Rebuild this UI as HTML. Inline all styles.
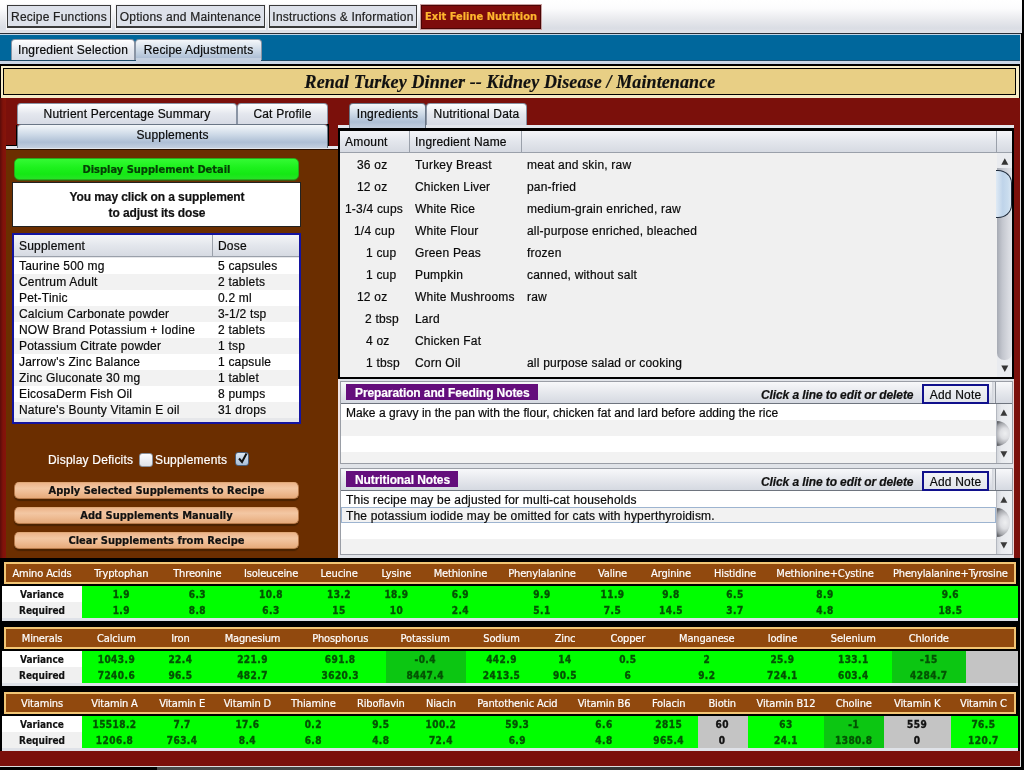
<!DOCTYPE html>
<html>
<head>
<meta charset="utf-8">
<title>Feline Nutrition</title>
<style>
html,body{margin:0;padding:0;}
body{width:1024px;height:770px;position:relative;overflow:hidden;background:#000;font-family:"Liberation Sans",sans-serif;font-size:12px;color:#0a0a0a;letter-spacing:0.2px;-webkit-text-stroke:0.2px;}
.a{position:absolute;box-sizing:border-box;}
.t{position:absolute;white-space:nowrap;line-height:14px;}
/* menu bar */
#menubar{left:0;top:0;width:1022px;height:34px;background:linear-gradient(#ffffff 0%,#fcfcfd 25%,#e8e9ed 60%,#dadde4 85%,#e0e2e8 100%);border-bottom:1px solid #2a2e36;}
.mbtn{top:4px;height:26px;border:1px solid #f4f4f6;border-bottom-width:2px;background:#dde1ea;}
.mbtn i{position:absolute;left:0;top:0;right:0;bottom:0;border:1px solid #3a3a3a;border-bottom-width:2px;}
.mbtn span{position:absolute;left:0;right:0;top:5px;text-align:center;font-size:12px;line-height:14px;color:#222;}
/* blue bar */
#bluebar{left:0;top:34px;width:1020px;height:27px;background:#00679c;border-top:1px solid #c0d4e6;}
.tab{border:1px solid #8a94a4;border-bottom:none;border-radius:4px 4px 0 0;background:linear-gradient(#ffffff,#e4e7ee 50%,#d7dbe5);text-align:center;font-size:12px;line-height:14px;color:#0a0a0a;}
.tabsel{background:linear-gradient(#f4f7fa 0%,#cfdbe8 40%,#aebfd5 75%,#c4d0e0 100%);}
/* nutrient table */
.nh{height:22px;border:2px solid #f3c674;background:#91490e;}
.nh span,.nv span{position:absolute;white-space:nowrap;transform:translateX(-50%);}
.nh span{top:3px;font-family:"DejaVu Sans Condensed","DejaVu Sans",sans-serif;font-size:11px;line-height:14px;color:#fff;letter-spacing:-0.15px;}
.nv{height:16px;}
.nv span{top:2px;font-family:"DejaVu Sans Condensed","DejaVu Sans",sans-serif;font-weight:bold;font-size:10px;line-height:14px;color:#045204;letter-spacing:0.45px;-webkit-text-stroke:0.35px;}
.nv span.lb{font-size:10px;letter-spacing:0;-webkit-text-stroke:0.15px;}
.nv span.k{color:#111;}
.g{background:#00ff00;}
.dg{background:#0cc612;}
.gr{background:#c4c4c4;}
.obtn{left:14px;width:285px;height:17px;border-radius:5px;background:linear-gradient(#ecb48a 0%,#f3c7a3 35%,#efbd95 60%,#e6aa7a 100%);border:1px solid #b87a4a;border-top-color:#e0a878;box-shadow:0 1.5px 1px #4a2200;}
.obtn span{position:absolute;left:0;right:0;top:1px;text-align:center;font-family:"DejaVu Sans Condensed","DejaVu Sans",sans-serif;font-weight:bold;font-size:11px;line-height:14px;color:#111;letter-spacing:0;white-space:nowrap;}
.sb{width:17px;background:#e6e8ec;border-left:1px solid #b8bcc4;}
</style>
</head>
<body>
<div id="root" style="position:absolute;left:0;top:0;width:1024px;height:770px;will-change:transform;">
<!-- MENU BAR -->
<div class="a" id="menubar"></div>
<div class="a mbtn" style="left:6px;width:106px;"><i></i><span>Recipe Functions</span></div>
<div class="a mbtn" style="left:115px;width:151px;"><i></i><span>Options and Maintenance</span></div>
<div class="a mbtn" style="left:268px;width:150px;"><i></i><span>Instructions &amp; Information</span></div>
<div class="a" style="left:420px;top:4px;width:122px;height:26px;background:#7d0c0c;border:1px solid #c9a0a0;box-shadow:inset 0 0 0 1px #4a0505;"><span class="t" style="left:0;right:0;top:5px;text-align:center;color:#ffb62e;font-family:'DejaVu Sans Condensed','DejaVu Sans',sans-serif;font-weight:bold;font-size:11px;letter-spacing:0;">Exit Feline Nutrition</span></div>
<div class="a" style="left:1022px;top:0;width:2px;height:770px;background:#000;"></div>

<!-- BLUE BAR + TABS -->
<div class="a" id="bluebar"></div>
<div class="a tab" style="left:11px;top:39px;width:124px;height:22px;padding-top:3px;">Ingredient Selection</div>
<div class="a tab tabsel" style="left:135px;top:39px;width:127px;height:25px;padding-top:3px;">Recipe Adjustments</div>
<div class="a" style="left:0;top:60px;width:1020px;height:4px;background:#c9d6e6;border-top:1px solid #1c4a68;"></div>
<div class="a tabsel" style="left:136px;top:58px;width:125px;height:6px;background:#c4d0e0;"></div>
<div class="a" style="left:0;top:64px;width:1020px;height:2px;background:#000;"></div>

<!-- TITLE BANNER -->
<div class="a" style="left:0;top:66px;width:1020px;height:32px;background:#f6ecc8;border-left:1px solid #000;border-right:1px solid #000;"></div>
<div class="a" style="left:3px;top:68px;width:1013px;height:27px;background:#e8cf85;border:1px solid #000;"></div>
<div class="t" style="left:0;width:1020px;top:72px;text-align:center;font-family:'Liberation Serif',serif;font-weight:bold;font-style:italic;font-size:18px;line-height:20px;color:#111;letter-spacing:0.12px;">Renal Turkey Dinner -- Kidney Disease / Maintenance</div>

<!-- MAIN RED BACKGROUND -->
<div class="a" style="left:0;top:98px;width:1020px;height:460px;background:#7b100b;"></div>
<div class="a" style="left:0;top:98px;width:6px;height:460px;background:linear-gradient(90deg,#5a0c0a,#80120a 50%,#86140a);"></div>
<div class="a" style="left:1020px;top:34px;width:1px;height:733px;background:#dcdcdc;"></div>
<div class="a" style="left:1021px;top:33px;width:3px;height:737px;background:#000;"></div>

<!-- LEFT PANEL -->
<div class="a" style="left:6px;top:145px;width:11px;height:1px;background:#000;"></div>
<div class="a" style="left:16px;top:125px;width:1px;height:21px;background:#000;"></div>
<div class="a" style="left:327px;top:124px;width:2px;height:23px;background:#000;"></div>
<div class="a" style="left:6px;top:146px;width:333px;height:3px;background:#e3e6ec;"></div>
<div class="a tab" style="left:17px;top:103px;width:220px;height:21px;padding-top:3px;">Nutrient Percentage Summary</div>
<div class="a tab" style="left:237px;top:103px;width:91px;height:21px;padding-top:3px;">Cat Profile</div>
<div class="a tab tabsel" style="left:17px;top:124px;width:311px;height:24px;padding-top:3px;border-color:#6a7686;">Supplements</div>
<div class="a" style="left:6px;top:149px;width:332px;height:409px;background:#6b2e00;border-top:1px solid #2a1000;"></div>
<div class="a" style="left:14px;top:158px;width:285px;height:22px;border-radius:5px;background:linear-gradient(#34fa34 0%,#1ef21e 40%,#14e814 75%,#26e426 100%);border:1px solid #2aa81a;box-shadow:0 1px 0 #3a5a10;"><span class="t" style="left:0;right:0;top:4px;text-align:center;font-family:'DejaVu Sans Condensed','DejaVu Sans',sans-serif;font-weight:bold;font-size:11px;color:#064006;letter-spacing:0;">Display Supplement Detail</span></div>
<div class="a" style="left:12px;top:182px;width:289px;height:45px;background:#fff;border:1px solid #222;"></div>
<div class="t" style="left:12px;width:290px;top:189px;text-align:center;font-weight:bold;font-size:12px;line-height:16px;color:#111;letter-spacing:-0.1px;">You may click on a supplement<br>to adjust its dose</div>
<!-- supplement table -->
<div class="a" style="left:12px;top:233px;width:289px;height:191px;background:#e6e7ea;border:2px solid #1414a0;"></div>
<div class="a" style="left:14px;top:235px;width:285px;height:22px;background:linear-gradient(#f4f5f8,#e3e6ec 50%,#d6dae2);border-bottom:1px solid #9aa0aa;"></div>
<div class="a" style="left:212px;top:235px;width:1px;height:21px;background:#9aa0aa;"></div>
<div class="t" style="left:19px;top:239px;">Supplement</div>
<div class="t" style="left:218px;top:239px;">Dose</div>
<div class="a" style="left:14px;top:258px;width:285px;height:16px;background:#ffffff;"></div><div class="t" style="left:19px;top:259px;">Taurine 500 mg</div><div class="t" style="left:218px;top:259px;">5 capsules</div>
<div class="a" style="left:14px;top:274px;width:285px;height:16px;background:#f2f2f2;"></div><div class="t" style="left:19px;top:275px;">Centrum Adult</div><div class="t" style="left:218px;top:275px;">2 tablets</div>
<div class="a" style="left:14px;top:290px;width:285px;height:16px;background:#ffffff;"></div><div class="t" style="left:19px;top:291px;">Pet-Tinic</div><div class="t" style="left:218px;top:291px;">0.2 ml</div>
<div class="a" style="left:14px;top:306px;width:285px;height:16px;background:#f2f2f2;"></div><div class="t" style="left:19px;top:307px;">Calcium Carbonate powder</div><div class="t" style="left:218px;top:307px;">3-1/2 tsp</div>
<div class="a" style="left:14px;top:322px;width:285px;height:16px;background:#ffffff;"></div><div class="t" style="left:19px;top:323px;">NOW Brand Potassium + Iodine</div><div class="t" style="left:218px;top:323px;">2 tablets</div>
<div class="a" style="left:14px;top:338px;width:285px;height:16px;background:#f2f2f2;"></div><div class="t" style="left:19px;top:339px;">Potassium Citrate powder</div><div class="t" style="left:218px;top:339px;">1 tsp</div>
<div class="a" style="left:14px;top:354px;width:285px;height:16px;background:#ffffff;"></div><div class="t" style="left:19px;top:355px;">Jarrow's Zinc Balance</div><div class="t" style="left:218px;top:355px;">1 capsule</div>
<div class="a" style="left:14px;top:370px;width:285px;height:16px;background:#f2f2f2;"></div><div class="t" style="left:19px;top:371px;">Zinc Gluconate 30 mg</div><div class="t" style="left:218px;top:371px;">1 tablet</div>
<div class="a" style="left:14px;top:386px;width:285px;height:16px;background:#ffffff;"></div><div class="t" style="left:19px;top:387px;">EicosaDerm Fish Oil</div><div class="t" style="left:218px;top:387px;">8 pumps</div>
<div class="a" style="left:14px;top:402px;width:285px;height:16px;background:#f2f2f2;"></div><div class="t" style="left:19px;top:403px;">Nature's Bounty Vitamin E oil</div><div class="t" style="left:218px;top:403px;">31 drops</div>

<div class="t" style="left:48px;top:453px;color:#fff;">Display Deficits</div>
<div class="t" style="left:155px;top:453px;color:#fff;">Supplements</div>
<div class="a" style="left:139px;top:453px;width:14px;height:14px;border-radius:3px;background:linear-gradient(#fdfdfe,#dfe3ea);border:1px solid #8a929e;"></div>
<div class="a" style="left:235px;top:452px;width:14px;height:14px;border-radius:3px;background:linear-gradient(#dbe6f2,#a9bfd8);border:1px solid #4a5f7a;"></div>
<svg class="a" style="left:235px;top:450px;" width="16" height="16" viewBox="0 0 16 16"><path d="M4 8.5 L7 12 L11.5 3.5" fill="none" stroke="#111" stroke-width="2"/></svg>
<div class="a obtn" style="top:482px;"><span>Apply Selected Supplements to Recipe</span></div>
<div class="a obtn" style="top:507px;"><span>Add Supplements Manually</span></div>
<div class="a obtn" style="top:532px;"><span>Clear Supplements from Recipe</span></div>

<!-- RIGHT PANEL -->
<div class="a" style="left:338px;top:125px;width:676px;height:3px;background:#e3e6ec;"></div>
<div class="a tab tabsel" style="left:349px;top:103px;width:77px;height:25px;padding-top:3px;border-color:#6a7686;">Ingredients</div>
<div class="a tab" style="left:426px;top:103px;width:101px;height:22px;padding-top:3px;">Nutritional Data</div>
<div class="a" style="left:338px;top:128px;width:676px;height:252px;background:#f0f0f0;border:2px solid #000;border-top-width:3px;border-bottom-width:3px;"></div>
<div class="a" style="left:340px;top:131px;width:672px;height:22px;background:linear-gradient(#f4f5f8,#e3e6ec 50%,#d6dae2);border-bottom:1px solid #9aa0aa;"></div>
<div class="a" style="left:409px;top:131px;width:1px;height:21px;background:#9aa0aa;"></div>
<div class="a" style="left:521px;top:131px;width:1px;height:21px;background:#9aa0aa;"></div>
<div class="a" style="left:996px;top:131px;width:1px;height:21px;background:#9aa0aa;"></div>
<div class="t" style="left:345px;top:135px;">Amount</div>
<div class="t" style="left:415px;top:135px;">Ingredient Name</div>
<div class="t" style="left:357px;top:158px;">36 oz</div><div class="t" style="left:415px;top:158px;">Turkey Breast</div><div class="t" style="left:527px;top:158px;">meat and skin, raw</div>
<div class="t" style="left:357px;top:180px;">12 oz</div><div class="t" style="left:415px;top:180px;">Chicken Liver</div><div class="t" style="left:527px;top:180px;">pan-fried</div>
<div class="t" style="left:345px;top:202px;">1-3/4 cups</div><div class="t" style="left:415px;top:202px;">White Rice</div><div class="t" style="left:527px;top:202px;">medium-grain enriched, raw</div>
<div class="t" style="left:354px;top:224px;">1/4 cup</div><div class="t" style="left:415px;top:224px;">White Flour</div><div class="t" style="left:527px;top:224px;">all-purpose enriched, bleached</div>
<div class="t" style="left:366px;top:246px;">1 cup</div><div class="t" style="left:415px;top:246px;">Green Peas</div><div class="t" style="left:527px;top:246px;">frozen</div>
<div class="t" style="left:366px;top:268px;">1 cup</div><div class="t" style="left:415px;top:268px;">Pumpkin</div><div class="t" style="left:527px;top:268px;">canned, without salt</div>
<div class="t" style="left:357px;top:290px;">12 oz</div><div class="t" style="left:415px;top:290px;">White Mushrooms</div><div class="t" style="left:527px;top:290px;">raw</div>
<div class="t" style="left:365px;top:312px;">2 tbsp</div><div class="t" style="left:415px;top:312px;">Lard</div>
<div class="t" style="left:366px;top:334px;">4 oz</div><div class="t" style="left:415px;top:334px;">Chicken Fat</div>
<div class="t" style="left:366px;top:356px;">1 tbsp</div><div class="t" style="left:415px;top:356px;">Corn Oil</div><div class="t" style="left:527px;top:356px;">all purpose salad or cooking</div>

<!-- scrollbar main -->
<div class="a" style="left:997px;top:153px;width:15px;height:224px;background:#e9ebef;"></div>
<div class="a" style="left:997px;top:168px;width:15px;height:192px;border-radius:0 0 7px 7px;background:linear-gradient(90deg,#a6aab3,#c3c6ce 35%,#d9dbe1 80%,#dfe1e6);"></div>
<div class="a" style="left:996px;top:170px;width:16px;height:48px;border-radius:0 14px 14px 0 / 0 13px 13px 0;background:linear-gradient(90deg,#dfeaf5,#bfd4ea 45%,#c9dcee 80%,#d8e5f2);border:1.5px solid #1e2a3a;border-left:none;"></div>
<svg class="a" style="left:997px;top:153px;" width="15" height="16"><path d="M4.3 11.8 L11.3 11.8 L7.8 5.2 Z" fill="#333"/></svg>
<svg class="a" style="left:997px;top:361px;" width="15" height="16"><path d="M4.3 4.4 L11.3 4.4 L7.8 10.9 Z" fill="#333"/></svg>

<!-- NOTES 1 -->
<div class="a" style="left:338px;top:379px;width:676px;height:179px;background:#e0e3e8;border-left:2px solid #f0e4e4;"></div>
<div class="a" style="left:340px;top:381px;width:673px;height:83px;background:#f2f2f2;border:1px solid #9a9ea6;"></div>
<div class="a" style="left:341px;top:382px;width:671px;height:22px;background:linear-gradient(#f7f8fa,#e6e8ed 50%,#d5d9e1);border-bottom:1px solid #6e747e;"></div>
<div class="a" style="left:346px;top:384px;width:192px;height:16px;background:#640e7c;"></div>
<div class="t" style="left:355px;top:386px;color:#fff;font-weight:bold;letter-spacing:-0.1px;">Preparation and Feeding Notes</div>
<div class="t" style="left:761px;top:388px;font-weight:bold;font-style:italic;color:#111;letter-spacing:-0.1px;">Click a line to edit or delete</div>
<div class="a" style="left:922px;top:384px;width:67px;height:20px;background:linear-gradient(#f2f3f6,#e2e5eb);border:2px solid #10108c;"></div>
<div class="t" style="left:922px;width:67px;top:388px;text-align:center;">Add Note</div>
<div class="a" style="left:992px;top:382px;width:4px;height:21px;background:linear-gradient(90deg,#d0d3da,#eceef1);"></div>
<div class="a" style="left:995px;top:382px;width:1px;height:21px;background:#8e939c;"></div>
<div class="a" style="left:341px;top:404px;width:655px;height:16px;background:#ffffff;"></div>
<div class="a" style="left:341px;top:420px;width:655px;height:16px;background:#f2f2f2;"></div>
<div class="a" style="left:341px;top:436px;width:655px;height:16px;background:#ffffff;"></div>
<div class="a" style="left:341px;top:452px;width:655px;height:11px;background:#f2f2f2;"></div>
<div class="t" style="left:346px;top:406px;letter-spacing:0.04px;">Make a gravy in the pan with the flour, chicken fat and lard before adding the rice</div>
<div class="a" style="left:996px;top:404px;width:16px;height:59px;background:linear-gradient(90deg,#d4d7dc,#e8eaee 30%,#eef0f3);border-left:1px solid #b4b8c0;"></div>
<div class="a" style="left:997px;top:421px;width:13px;height:25px;border-radius:0 13px 13px 0 / 0 12.5px 12.5px 0;background:radial-gradient(ellipse 95% 55% at 62% 50%,#eeeff1 0%,#dddee2 40%,#a2a4a9 80%,#63656a 100%);"></div>
<svg class="a" style="left:996px;top:404px;" width="16" height="16"><path d="M4.4 11.8 L11.3 11.8 L7.85 5.5 Z" fill="#3a3a3a"/></svg>
<svg class="a" style="left:996px;top:447px;" width="16" height="16"><path d="M4.4 4.3 L11.3 4.3 L7.85 10.6 Z" fill="#3a3a3a"/></svg>
<!-- NOTES 2 -->
<div class="a" style="left:340px;top:468px;width:673px;height:87px;background:#f2f2f2;border:1px solid #9a9ea6;"></div>
<div class="a" style="left:341px;top:469px;width:671px;height:22px;background:linear-gradient(#f7f8fa,#e6e8ed 50%,#d5d9e1);border-bottom:1px solid #6e747e;"></div>
<div class="a" style="left:346px;top:471px;width:112px;height:16px;background:#640e7c;"></div>
<div class="t" style="left:355px;top:473px;color:#fff;font-weight:bold;letter-spacing:-0.1px;">Nutritional Notes</div>
<div class="t" style="left:761px;top:475px;font-weight:bold;font-style:italic;color:#111;letter-spacing:-0.1px;">Click a line to edit or delete</div>
<div class="a" style="left:922px;top:471px;width:67px;height:20px;background:linear-gradient(#f2f3f6,#e2e5eb);border:2px solid #10108c;"></div>
<div class="t" style="left:922px;width:67px;top:475px;text-align:center;">Add Note</div>
<div class="a" style="left:992px;top:469px;width:4px;height:21px;background:linear-gradient(90deg,#d0d3da,#eceef1);"></div>
<div class="a" style="left:995px;top:469px;width:1px;height:21px;background:#8e939c;"></div>
<div class="a" style="left:341px;top:491px;width:655px;height:16px;background:#ffffff;"></div>
<div class="a" style="left:341px;top:507px;width:655px;height:16px;background:#f2f2f2;border:1px solid #9db4d0;"></div>
<div class="a" style="left:341px;top:523px;width:655px;height:16px;background:#ffffff;"></div>
<div class="a" style="left:341px;top:539px;width:655px;height:15px;background:#f2f2f2;"></div>
<div class="t" style="left:346px;top:493px;letter-spacing:0.19px;">This recipe may be adjusted for multi-cat households</div>
<div class="t" style="left:346px;top:509px;letter-spacing:0.16px;">The potassium iodide may be omitted for cats with hyperthyroidism.</div>
<div class="a" style="left:996px;top:491px;width:16px;height:63px;background:linear-gradient(90deg,#d4d7dc,#e8eaee 30%,#eef0f3);border-left:1px solid #b4b8c0;"></div>
<div class="a" style="left:997px;top:508px;width:13px;height:29px;border-radius:0 13px 13px 0 / 0 14.5px 14.5px 0;background:radial-gradient(ellipse 95% 55% at 62% 50%,#eeeff1 0%,#dddee2 40%,#a2a4a9 80%,#63656a 100%);"></div>
<svg class="a" style="left:996px;top:491px;" width="16" height="16"><path d="M4.4 11.8 L11.3 11.8 L7.85 5.5 Z" fill="#3a3a3a"/></svg>
<svg class="a" style="left:996px;top:538px;" width="16" height="16"><path d="M4.4 4.3 L11.3 4.3 L7.85 10.6 Z" fill="#3a3a3a"/></svg>
<div class="a" style="left:1013px;top:380px;width:1px;height:177px;background:#f0d8d8;"></div>
<div class="a" style="left:0;top:558px;width:1020px;height:4px;background:#000;"></div>

<!-- NUTRIENT TABLES -->
<div class="a nh" style="left:4px;top:562px;width:1012px;"><span style="left:36.0px;">Amino Acids</span><span style="left:115.3px;">Tryptophan</span><span style="left:191.4px;">Threonine</span><span style="left:265.0px;">Isoleuceine</span><span style="left:333.0px;">Leucine</span><span style="left:390.4px;">Lysine</span><span style="left:454.4px;">Methionine</span><span style="left:536.0px;">Phenylalanine</span><span style="left:606.5px;">Valine</span><span style="left:665.0px;">Arginine</span><span style="left:729.0px;">Histidine</span><span style="left:819.0px;">Methionine+Cystine</span><span style="left:944.4px;">Phenylalanine+Tyrosine</span></div>
<div class="a" style="left:2px;top:586px;width:1016px;height:35px;background:#dfe2e8;"></div><div class="a" style="left:2px;top:586px;width:80px;height:16px;background:#fff;"></div><div class="a" style="left:2px;top:602px;width:80px;height:16px;background:#f0f0f0;"></div><div class="a g" style="left:82px;top:586px;width:936px;height:32px;"></div>
<div class="a nv" style="left:0;top:586px;width:1018px;"><span class="k lb" style="left:42px;">Variance</span><span style="left:121.3px;">1.9</span><span style="left:197.4px;">6.3</span><span style="left:271.0px;">10.8</span><span style="left:339.0px;">13.2</span><span style="left:396.4px;">18.9</span><span style="left:460.4px;">6.9</span><span style="left:542.0px;">9.9</span><span style="left:612.5px;">11.9</span><span style="left:671.0px;">9.8</span><span style="left:735.0px;">6.5</span><span style="left:825.0px;">8.9</span><span style="left:950.4px;">9.6</span></div>
<div class="a nv" style="left:0;top:602px;width:1018px;"><span class="k lb" style="left:42px;">Required</span><span style="left:121.3px;">1.9</span><span style="left:197.4px;">8.8</span><span style="left:271.0px;">6.3</span><span style="left:339.0px;">15</span><span style="left:396.4px;">10</span><span style="left:460.4px;">2.4</span><span style="left:542.0px;">5.1</span><span style="left:612.5px;">7.5</span><span style="left:671.0px;">14.5</span><span style="left:735.0px;">3.7</span><span style="left:825.0px;">4.8</span><span style="left:950.4px;">18.5</span></div>
<div class="a nh" style="left:4px;top:627px;width:1012px;"><span style="left:36.0px;">Minerals</span><span style="left:110.4px;">Calcium</span><span style="left:174.4px;">Iron</span><span style="left:246.5px;">Magnesium</span><span style="left:334.2px;">Phosphorus</span><span style="left:419.2px;">Potassium</span><span style="left:495.5px;">Sodium</span><span style="left:559.0px;">Zinc</span><span style="left:621.8px;">Copper</span><span style="left:700.8px;">Manganese</span><span style="left:776.4px;">Iodine</span><span style="left:847.3px;">Selenium</span><span style="left:922.8px;">Chloride</span></div>
<div class="a" style="left:2px;top:651px;width:1016px;height:35px;background:#dfe2e8;"></div><div class="a" style="left:2px;top:651px;width:80px;height:16px;background:#fff;"></div><div class="a" style="left:2px;top:667px;width:80px;height:16px;background:#f0f0f0;"></div><div class="a g" style="left:82px;top:651px;width:304px;height:32px;"></div><div class="a dg" style="left:386px;top:651px;width:80px;height:32px;"></div><div class="a g" style="left:466px;top:651px;width:426px;height:32px;"></div><div class="a dg" style="left:892px;top:651px;width:74px;height:32px;"></div><div class="a gr" style="left:966px;top:651px;width:52px;height:32px;"></div>
<div class="a nv" style="left:0;top:651px;width:1018px;"><span class="k lb" style="left:42px;">Variance</span><span style="left:116.4px;">1043.9</span><span style="left:180.4px;">22.4</span><span style="left:252.5px;">221.9</span><span style="left:340.2px;">691.8</span><span style="left:425.2px;">-0.4</span><span style="left:501.5px;">442.9</span><span style="left:565.0px;">14</span><span style="left:627.8px;">0.5</span><span style="left:706.8px;">2</span><span style="left:782.4px;">25.9</span><span style="left:853.3px;">133.1</span><span style="left:928.8px;">-15</span></div>
<div class="a nv" style="left:0;top:667px;width:1018px;"><span class="k lb" style="left:42px;">Required</span><span style="left:116.4px;">7240.6</span><span style="left:180.4px;">96.5</span><span style="left:252.5px;">482.7</span><span style="left:340.2px;">3620.3</span><span style="left:425.2px;">8447.4</span><span style="left:501.5px;">2413.5</span><span style="left:565.0px;">90.5</span><span style="left:627.8px;">6</span><span style="left:706.8px;">9.2</span><span style="left:782.4px;">724.1</span><span style="left:853.3px;">603.4</span><span style="left:928.8px;">4284.7</span></div>
<div class="a nh" style="left:4px;top:692px;width:1012px;"><span style="left:36.0px;">Vitamins</span><span style="left:108.5px;">Vitamin A</span><span style="left:176.1px;">Vitamin E</span><span style="left:241.4px;">Vitamin D</span><span style="left:307.3px;">Thiamine</span><span style="left:374.8px;">Riboflavin</span><span style="left:434.9px;">Niacin</span><span style="left:511.3px;">Pantothenic Acid</span><span style="left:598.0px;">Vitamin B6</span><span style="left:662.7px;">Folacin</span><span style="left:716.2px;">Biotin</span><span style="left:780.0px;">Vitamin B12</span><span style="left:847.7px;">Choline</span><span style="left:911.2px;">Vitamin K</span><span style="left:977.4px;">Vitamin C</span></div>
<div class="a" style="left:2px;top:716px;width:1016px;height:35px;background:#dfe2e8;"></div><div class="a" style="left:2px;top:716px;width:80px;height:16px;background:#fff;"></div><div class="a" style="left:2px;top:732px;width:80px;height:16px;background:#f0f0f0;"></div><div class="a g" style="left:82px;top:716px;width:616px;height:32px;"></div><div class="a gr" style="left:698px;top:716px;width:50px;height:32px;"></div><div class="a g" style="left:748px;top:716px;width:76px;height:32px;"></div><div class="a dg" style="left:824px;top:716px;width:60px;height:32px;"></div><div class="a gr" style="left:884px;top:716px;width:67px;height:32px;"></div><div class="a g" style="left:951px;top:716px;width:67px;height:32px;"></div>
<div class="a nv" style="left:0;top:716px;width:1018px;"><span class="k lb" style="left:42px;">Variance</span><span style="left:114.5px;">15518.2</span><span style="left:182.1px;">7.7</span><span style="left:247.4px;">17.6</span><span style="left:313.3px;">0.2</span><span style="left:380.8px;">9.5</span><span style="left:440.9px;">100.2</span><span style="left:517.3px;">59.3</span><span style="left:604.0px;">6.6</span><span style="left:668.7px;">2815</span><span class="k" style="left:722.2px;">60</span><span style="left:786.0px;">63</span><span style="left:853.7px;">-1</span><span class="k" style="left:917.2px;">559</span><span style="left:983.4px;">76.5</span></div>
<div class="a nv" style="left:0;top:732px;width:1018px;"><span class="k lb" style="left:42px;">Required</span><span style="left:114.5px;">1206.8</span><span style="left:182.1px;">763.4</span><span style="left:247.4px;">8.4</span><span style="left:313.3px;">6.8</span><span style="left:380.8px;">4.8</span><span style="left:440.9px;">72.4</span><span style="left:517.3px;">6.9</span><span style="left:604.0px;">4.8</span><span style="left:668.7px;">965.4</span><span class="k" style="left:722.2px;">0</span><span style="left:786.0px;">24.1</span><span style="left:853.7px;">1380.8</span><span class="k" style="left:917.2px;">0</span><span style="left:983.4px;">120.7</span></div>
<div class="a" style="left:0;top:751px;width:1020px;height:15px;background:#7b100b;"></div>
<div class="a" style="left:0;top:766px;width:1021px;height:1px;background:#dcdcdc;"></div>
<div class="a" style="left:0;top:767px;width:1024px;height:3px;background:#000;"></div>
<div class="a" style="left:157px;top:767px;width:703px;height:3px;background:linear-gradient(90deg,#4a4a4a,#3a3a3a 60%,#1a1a1a);"></div>

</div>
</body>
</html>
